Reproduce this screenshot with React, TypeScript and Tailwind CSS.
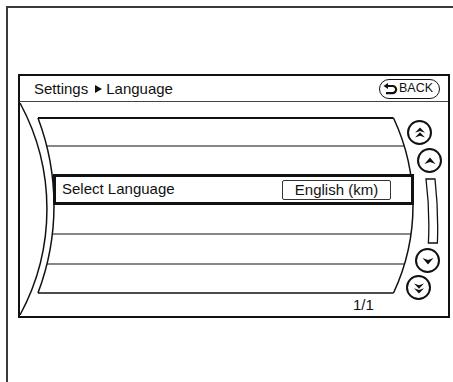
import React from 'react';

// geometry of the curved list (relative to the list area, 428 x 214)
const MID = 103.5;
const xLeft = (y: number) => -213 + Math.sqrt(247 * 247 - (y - MID) ** 2);
const xRight = (y: number) => 187 + Math.sqrt(206 * 206 - (y - MID) ** 2);
const rowLines = [
  { y: 16, w: 2 },
  { y: 44, w: 1.2 },
  { y: 132, w: 1.2 },
  { y: 162, w: 1.2 },
  { y: 191, w: 1.5 },
];

function ListDrawing() {
  return (
    <svg className="absolute inset-0 pointer-events-none" width="428" height="214" viewBox="0 0 428 214" fill="none" stroke="#111">
      <path d="M0 1 A222 222 0 0 1 0 213" strokeWidth="1.5" />
      <path d={`M${xLeft(16)} 16 A247 247 0 0 1 ${xLeft(191)} 191`} strokeWidth="1.5" />
      <path d={`M${xRight(16)} 16 A206 206 0 0 1 ${xRight(191)} 191`} strokeWidth="1.5" />
      {rowLines.map(r => (
        <line key={r.y} x1={xLeft(r.y)} x2={xRight(r.y)} y1={r.y} y2={r.y} strokeWidth={r.w} />
      ))}
    </svg>
  );
}

function RoundBtn({ double = false, down = false }: { double?: boolean; down?: boolean }) {
  return (
    <button className="w-[25px] h-[25px] rounded-full border-2 border-[#111] bg-white flex items-center justify-center">
      <svg width="14" height="14" viewBox="-7 -7 14 14" fill="#111">
        <g transform={down ? 'rotate(180)' : undefined}>
          {double ? (
            <>
              <path d="M0 -5.5 L5 -0.2 L0 -2 L-5 -0.2Z" />
              <path d="M0 -0.8 L5 4.5 L0 2.7 L-5 4.5Z" />
            </>
          ) : (
            <path d="M0 -3.5 L5.5 3 L0 1 L-5.5 3Z" />
          )}
        </g>
      </svg>
    </button>
  );
}

export default function App() {
  return (
    <div className="w-[453px] h-[382px] bg-white overflow-hidden pl-[6px] pt-[6px] font-['Liberation_Sans',Arial,sans-serif] text-[#111]">
      <div className="h-[376px] border-l-2 border-t-2 border-[#3a3a3a]">
        <div className="ml-[10px] mt-[66px] w-[432px] h-[244px] border-2 border-[#111] flex flex-col">
          <div className="h-[26px] border-b border-[#444] flex items-center justify-between pl-[14px] pr-[8px]">
            <div className="flex items-center text-[15px] leading-none">
              <span>Settings</span>
              <svg className="ml-[7px] mr-[4px]" width="7" height="8" viewBox="0 0 7 8" fill="#111">
                <path d="M0 0 L7 4 L0 8Z" />
              </svg>
              <span>Language</span>
            </div>
            <button className="h-[20px] w-[61px] rounded-full border-[1.5px] border-[#111] flex items-center pl-[3px] text-[12.5px] leading-none">
              <svg width="15" height="12" viewBox="0 0 15 12" fill="none" stroke="#111">
                <path d="M4 3 H9.5 A3.6 3.6 0 0 1 9.5 10.2 H3" strokeWidth="2.2" />
                <path d="M0.5 3 L5 0 L5 6Z" fill="#111" stroke="none" />
              </svg>
              <span className="ml-[1px]">BACK</span>
            </button>
          </div>
          <div className="relative flex-1 flex">
            <ListDrawing />
            <div className="relative w-[385px] flex flex-col">
              <div className="ml-[33px] mt-[72px] w-[361px] h-[31px] border-[3px] border-[#111] bg-white flex items-center justify-between pl-[6px] pr-[20px] text-[15px]">
                <span>Select Language</span>
                <div className="w-[109px] h-[20px] border-[1.5px] border-[#333] rounded-[2px] flex items-center justify-center leading-none">
                  English (km)
                </div>
              </div>
              <div className="ml-[333px] mt-[91px] text-[15px] leading-[17px]">1/1</div>
            </div>
            <div className="relative flex flex-col">
              <div className="ml-[2px] mt-[18px]"><RoundBtn double /></div>
              <div className="ml-[12px] mt-[3px]"><RoundBtn /></div>
              <svg className="ml-[20px] mt-[5px]" width="14" height="66" viewBox="0 0 14 66" fill="none" stroke="#111" strokeWidth="1.3">
                <path d="M1 1 H10 Q13.6 33 12.4 65 H3.4 Q5 33 1 1 Z" />
              </svg>
              <div className="ml-[10px] mt-[4px]"><RoundBtn down /></div>
              <div className="ml-[1px] mt-[2px]"><RoundBtn double down /></div>
            </div>
          </div>
        </div>
      </div>
    </div>
  );
}
